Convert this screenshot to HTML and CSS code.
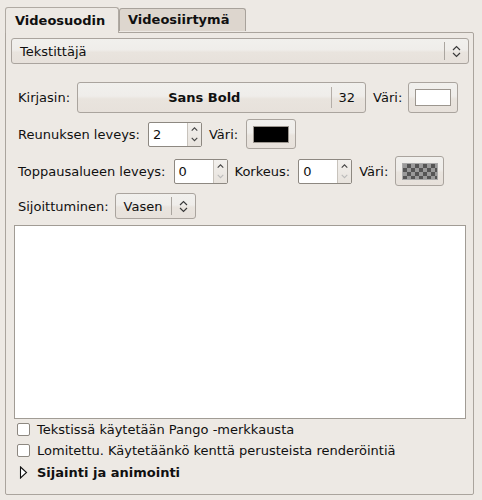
FILE: index.html
```html
<!DOCTYPE html>
<html>
<head>
<meta charset="utf-8">
<link rel="stylesheet" href="styles.css">
</head>
<body>
<div class="win">
  <div class="tabs">
    <div class="tab active">Videosuodin</div>
    <div class="tab">Videosiirtymä</div>
  </div>
  <div class="panel">
    <div class="combo wide">
      <span class="combo-text">Tekstittäjä</span>
      <span class="sep"></span>
      <svg class="updown" width="9" height="13" viewBox="0 0 9 13"><path d="M1 5 L4.5 1.5 L8 5 M1 8 L4.5 11.5 L8 8" fill="none" stroke="#3a3a3a" stroke-width="1.2"/></svg>
    </div>
    <div class="content">
      <div class="row r1">
        <span class="lbl">Kirjasin:</span>
        <div class="btn fontbtn">
          <span class="fontname">Sans Bold</span>
          <span class="sep tall"></span>
          <span class="fontsize">32</span>
        </div>
        <span class="lbl">Väri:</span>
        <div class="btn colorbtn"><span class="swatch white"></span></div>
      </div>
      <div class="row r2">
        <span class="lbl">Reunuksen leveys:</span>
        <div class="spin">
          <span class="spin-val">2</span>
          <span class="spin-arrows">
            <svg width="14" height="12" viewBox="0 0 14 12"><path d="M4 8 L7 5 L10 8" fill="none" stroke="#444" stroke-width="1.2"/></svg>
            <svg width="14" height="12" viewBox="0 0 14 12"><path d="M4 4 L7 7 L10 4" fill="none" stroke="#444" stroke-width="1.2"/></svg>
          </span>
        </div>
        <span class="lbl">Väri:</span>
        <div class="btn colorbtn c2"><span class="swatch black"></span></div>
      </div>
      <div class="row r3">
        <span class="lbl">Toppausalueen leveys:</span>
        <div class="spin">
          <span class="spin-val">0</span>
          <span class="spin-arrows">
            <svg width="14" height="12" viewBox="0 0 14 12"><path d="M4 8 L7 5 L10 8" fill="none" stroke="#444" stroke-width="1.2"/></svg>
            <svg width="14" height="12" viewBox="0 0 14 12"><path d="M4 4 L7 7 L10 4" fill="none" stroke="#bbb" stroke-width="1.2"/></svg>
          </span>
        </div>
        <span class="lbl">Korkeus:</span>
        <div class="spin">
          <span class="spin-val">0</span>
          <span class="spin-arrows">
            <svg width="14" height="12" viewBox="0 0 14 12"><path d="M4 8 L7 5 L10 8" fill="none" stroke="#444" stroke-width="1.2"/></svg>
            <svg width="14" height="12" viewBox="0 0 14 12"><path d="M4 4 L7 7 L10 4" fill="none" stroke="#bbb" stroke-width="1.2"/></svg>
          </span>
        </div>
        <span class="lbl">Väri:</span>
        <div class="btn colorbtn c3"><span class="swatch checker"></span></div>
      </div>
      <div class="row r4">
        <span class="lbl">Sijoittuminen:</span>
        <div class="combo small">
          <span class="combo-text">Vasen</span>
          <span class="sep"></span>
          <svg class="updown" width="9" height="13" viewBox="0 0 9 13"><path d="M1 5 L4.5 1.5 L8 5 M1 8 L4.5 11.5 L8 8" fill="none" stroke="#3a3a3a" stroke-width="1.2"/></svg>
        </div>
      </div>
      <div class="textarea"></div>
      <div class="check"><span class="box"></span>Tekstissä käytetään Pango -merkkausta</div>
      <div class="check"><span class="box"></span>Lomitettu. Käytetäänkö kenttä perusteista renderöintiä</div>
      <div class="expander">
        <svg width="9" height="13" viewBox="0 0 9 13"><path d="M1.5 1 L7.5 6.5 L1.5 12 Z" fill="#fff" stroke="#111" stroke-width="1.1"/></svg>
        <span>Sijainti ja animointi</span>
      </div>
    </div>
  </div>
</div>
</body>
</html>
```

FILE: styles.css
```css
* { box-sizing: border-box; }
html, body {
  margin: 0;
  padding: 0;
  background: #ede9e4;
  font-family: "DejaVu Sans", sans-serif;
  font-size: 13px;
  color: #101010;
}
.win {
  width: 482px;
  height: 500px;
  padding: 6px 0 0 5px;
}
.tabs {
  display: flex;
  align-items: flex-end;
  height: 26px;
  position: relative;
  z-index: 2;
}
.tab {
  font-weight: bold;
  border: 1px solid #a8a29b;
  border-bottom: none;
  border-radius: 3px 3px 0 0;
  background: #ddd6ce;
  height: 23px;
  line-height: 21px;
  padding: 0 0 0 8px;
  width: 127px;
  margin-bottom: 1px;
}
.tab.active {
  background: #ede9e4;
  height: 26px;
  line-height: 25px;
  width: 114px;
  margin-bottom: -1px;
  padding-left: 9px;
  border-color: #b0aaa3;
}
.panel {
  width: 469px;
  height: 463px;
  border: 1px solid #aaa49d;
  border-radius: 0 2px 2px 2px;
  background: #ede9e4;
  padding: 5px 0 0 5px;
}
.combo {
  display: flex;
  align-items: center;
  height: 26px;
  border: 1px solid #aaa49e;
  border-radius: 3px;
  background: linear-gradient(#f1f0ed 0%, #efedea 45%, #e9e4de 55%, #e7e1db 100%);
  padding-left: 8px;
}
.combo.wide { width: 458px; }
.combo-text { flex: 1; }
.combo .sep {
  width: 1px;
  height: 18px;
  background: #aaa59f;
  margin-right: 7px;
}
.combo .updown { margin-right: 7px; }
.combo.small {
  width: 81px;
  margin-left: 6px;
}
.content {
  padding: 0 0 0 3px;
}
.row {
  display: flex;
  align-items: center;
  padding-left: 4px;
}
.r1 { margin-top: 18px; height: 31px; }
.r2 { margin-top: 6px; height: 30px; }
.r3 { margin-top: 7px; height: 30px; }
.r4 { margin-top: 7px; height: 26px; }
.btn {
  border: 1px solid #aaa49e;
  border-radius: 3px;
  background: linear-gradient(#f1f0ed 0%, #efedea 45%, #e9e4de 55%, #e7e1db 100%);
  display: flex;
  align-items: center;
}
.fontbtn {
  width: 289px;
  height: 31px;
  margin-left: 7px;
  margin-right: 7px;
  padding-right: 10px;
}
.fontname {
  flex: 1;
  text-align: center;
  font-weight: bold;
  padding-left: 0;
}
.sep.tall {
  width: 1px;
  height: 21px;
  background: #b4aea8;
  margin-right: 7px;
}
.colorbtn {
  width: 50px;
  height: 31px;
  margin-left: 6px;
  justify-content: center;
}
.colorbtn.c2 { height: 30px; margin-left: 8px; }
.colorbtn.c3 { height: 30px; width: 49px; margin-left: 7px; }
.swatch {
  width: 36px;
  height: 17px;
  border: 1px solid #9c968f;
}
.swatch.white { background: #ffffff; }
.swatch.black { background: #000000; }
.swatch.checker {
  background-color: #9a9a9a;
  background-image: repeating-conic-gradient(#555 0 25%, #9a9a9a 0 50%);
  background-size: 8px 8px;
  border-color: #aaa;
}
.spin {
  display: flex;
  width: 54px;
  height: 25px;
  border: 1px solid #8d8881;
  border-radius: 2px;
  background: #fff;
  margin: 0 7px 0 8px;
}
.spin-val {
  flex: 1;
  padding-left: 4px;
  line-height: 23px;
}
.spin-arrows {
  width: 14px;
  display: flex;
  flex-direction: column;
  background: linear-gradient(#f2f0ed, #e8e3dd);
  border-left: 1px solid #c8c3bc;
}
.spin-arrows svg { display: block; width: 13px; height: 11.5px; }
.textarea {
  width: 452px;
  height: 194px;
  margin-top: 6px;
  background: #fff;
  border: 1px solid #a19c95;
}
.check {
  display: flex;
  align-items: center;
  height: 21px;
  padding-left: 3px;
}
.check:first-of-type { margin-top: 1px; }
.box {
  width: 13px;
  height: 13px;
  border: 1px solid #8d8881;
  border-radius: 2px;
  background: #fff;
  margin-right: 7px;
}
.expander {
  display: flex;
  align-items: center;
  height: 22px;
  padding-left: 5px;
  font-weight: bold;
}
.expander svg { margin-right: 9px; }
```
